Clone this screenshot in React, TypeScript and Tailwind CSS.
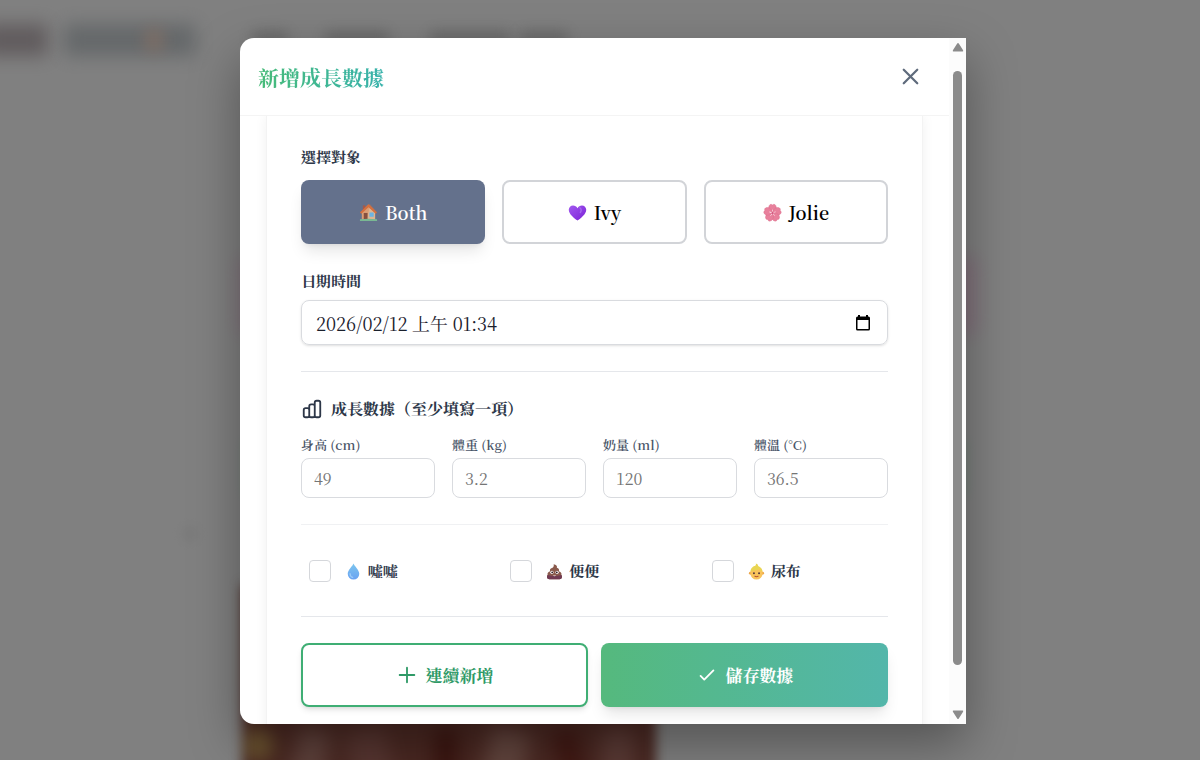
import React, { useState } from "react";

const ICONS = {
  close: "M6 18L18 6M6 6l12 12",
  plus: "M12 4v16m8-8H4",
  check: "M5 13l4 4L19 7",
  chart:
    "M9 19v-6a2 2 0 00-2-2H5a2 2 0 00-2 2v6a2 2 0 002 2h2a2 2 0 002-2zm0 0V9a2 2 0 012-2h2a2 2 0 012 2v10m-6 0a2 2 0 002 2h2a2 2 0 002-2m0 0V5a2 2 0 012-2h2a2 2 0 012 2v14a2 2 0 01-2 2h-2a2 2 0 01-2-2z",
};

const Icon = ({ name, className }: { name: keyof typeof ICONS; className: string }) => (
  <svg
    viewBox="0 0 24 24"
    fill="none"
    stroke="currentColor"
    strokeWidth={2}
    strokeLinecap="round"
    strokeLinejoin="round"
    className={className}
    aria-hidden="true"
  >
    <path d={ICONS[name]} />
  </svg>
);

const House = () => (
  <svg viewBox="0 0 20 20" className="size-[19px]" aria-hidden="true">
    <rect x="4" y="2.5" width="2.600" height="6" fill="#a55a4a" />
    <path d="M3 9.5 11 2.500l6 7V18H3z" fill="#dcb592" />
    <path d="M9 4 11.500 1 19 9.800l-1.700 1.200L11.200 4.600 8 18H3V11L1 9.800z" fill="#d9743f" opacity=".35" />
    <path d="M1 10 9.400 1.500a1 1 0 0 1 1.300 0L19 10l-1.500 1.400L10 4.400 2.500 11.400z" fill="#d4703f" />
    <rect x="5" y="10.500" width="4" height="7.500" fill="#86503f" />
    <rect x="11" y="10" width="4.500" height="4.500" fill="#6bb4e2" />
    <path d="M1 17.200q9-1.200 18 0V19H1z" fill="#79b893" />
  </svg>
);

const PurpleHeart = () => (
  <svg viewBox="0 0 20 20" className="size-[19px]" aria-hidden="true">
    <defs>
      <linearGradient id="heart" x1="0" y1="0" x2="1" y2="1">
        <stop offset="0" stopColor="#a259f0" />
        <stop offset="1" stopColor="#7a22d6" />
      </linearGradient>
    </defs>
    <path
      d="M10 18.5C7 16.5.8 12 .8 7.200.8 4.500 2.800 2.500 5.300 2.500 7.300 2.500 9 3.500 10 5.400 11 3.500 12.700 2.500 14.700 2.500c2.500 0 4.500 2 4.500 4.700C19.200 12 13 16.500 10 18.500z"
      fill="url(#heart)"
    />
    <path d="M12.500 5q2.500 2 .5 5" stroke="#a668ef" strokeWidth="1.500" fill="none" strokeLinecap="round" />
  </svg>
);

const Blossom = () => (
  <svg viewBox="0 0 20 20" className="size-[19px]" aria-hidden="true">
    {[0, 72, 144, 216, 288].map((angle) => (
      <g key={angle} transform={`rotate(${angle} 10 10.5)`}>
        <path
          d="M10 10.500C6 8.500 5.300 5 6.500 2.800c.8-1.500 2.300-1.800 3.500-.8 1.200-1 2.700-.7 3.500.8 1.200 2.200.5 5.700-3.500 7.700z"
          fill="#e8809c"
          stroke="#dd6c8b"
          strokeWidth=".4"
        />
        <path d="M10 10.500V7.500" stroke="#ffe9ef" strokeWidth=".9" strokeLinecap="round" />
      </g>
    ))}
    <circle cx="10" cy="10.500" r="1.100" fill="#d0527a" />
  </svg>
);

const Drop = () => (
  <svg viewBox="0 0 20 20" className="size-[17px]" aria-hidden="true">
    <defs>
      <linearGradient id="drop" x1="0" y1="0" x2="0" y2="1">
        <stop offset="0" stopColor="#7cc6ee" />
        <stop offset="1" stopColor="#6aa2f2" />
      </linearGradient>
    </defs>
    <path d="M10 .5c1 3 6.800 7.500 6.800 12.200a6.800 6.800 0 0 1-13.600 0C3.200 8 9 3.500 10 .5z" fill="url(#drop)" />
    <path d="M6 12.500q0 3.500 3 4.500" stroke="#9bcbf8" strokeWidth="1.500" fill="none" strokeLinecap="round" />
  </svg>
);

const Poo = () => (
  <svg viewBox="0 0 20 20" className="size-[17px]" aria-hidden="true">
    <path
      d="M9 1.500c3 .5 4.500 2 3.800 4.200 2.200.6 3 2.300 2.400 4 2.800 1 3.500 2.800 2.800 4.300 1.500 1.500 1 5-2 5H4c-3 0-3.500-3.500-2-5-.7-1.500 0-3.300 2.800-4.300C4.200 8 5 6.500 7 6c2-.6 2.500-2.500 2-4.500z"
      fill="#8a5a4c"
    />
    <path d="M2 14q8 2.500 16 0c1.500 1.500 1 5-2 5H4c-3 0-3.500-3.500-2-5z" fill="#713a52" />
    <circle cx="7" cy="11" r="1.900" fill="#fff" />
    <circle cx="13" cy="11" r="1.900" fill="#fff" />
    <circle cx="7.300" cy="11" r="1.100" fill="#2b1a22" />
    <circle cx="12.700" cy="11" r="1.100" fill="#2b1a22" />
    <path d="M8 14.800q2 1.600 4 0z" fill="#fff" />
  </svg>
);

const Baby = () => (
  <svg viewBox="0 0 20 20" className="size-[17px]" aria-hidden="true">
    <circle cx="2.800" cy="12" r="1.700" fill="#eda548" />
    <circle cx="17.200" cy="12" r="1.700" fill="#eda548" />
    <ellipse cx="10" cy="11.800" rx="7.200" ry="7.700" fill="#f9c45c" />
    <path d="M3 10C3 5.500 6.500 3.800 8.500 3.200 9.500 2.700 9.500 1.800 9.200.6c2 .6 3 1.800 2.700 2.800C15 4.500 17 6.800 17 10c-2-.6-3.200-1.600-4-2.800C10.500 9 6 9 3 10z" fill="#e9d552" />
    <circle cx="7" cy="12" r="1.100" fill="#4a2f3a" />
    <circle cx="13" cy="12" r="1.100" fill="#4a2f3a" />
    <path d="M8 15.500q2 1.400 4 0" stroke="#b5502e" strokeWidth="1.200" fill="none" strokeLinecap="round" />
  </svg>
);

const people = [
  { name: "Both", emoji: <House /> },
  { name: "Ivy", emoji: <PurpleHeart /> },
  { name: "Jolie", emoji: <Blossom /> },
];

const measures = [
  { id: "height", label: "身高 (cm)", placeholder: "49" },
  { id: "weight", label: "體重 (kg)", placeholder: "3.2" },
  { id: "milk", label: "奶量 (ml)", placeholder: "120" },
  { id: "temperature", label: "體溫 (°C)", placeholder: "36.5" },
];

const events = [
  { id: "pee", label: "噓噓", emoji: <Drop /> },
  { id: "poo", label: "便便", emoji: <Poo /> },
  { id: "diaper", label: "尿布", emoji: <Baby /> },
];

// Out-of-focus page behind the dialog
const Backdrop = () => (
  <div className="absolute inset-0 overflow-hidden bg-[#808080]" aria-hidden="true">
    <div className="absolute -left-4 top-6 h-8 w-16 bg-[#51494c] opacity-65 blur-[9px]" />
    <div className="absolute left-16 top-6 h-8 w-[132px] bg-[#54595c] opacity-60 blur-[9px]" />
    <div className="absolute left-36 top-7 h-6 w-5 bg-[#8a7062] opacity-50 blur-[7px]" />
    <div className="absolute left-[252px] top-8 h-3 w-9 bg-[#555] opacity-60 blur-[7px]" />
    <div className="absolute left-[325px] top-8 h-3 w-16 bg-[#555] opacity-60 blur-[7px]" />
    <div className="absolute left-[430px] top-8 h-3 w-20 bg-[#555] opacity-60 blur-[7px]" />
    <div className="absolute left-[520px] top-8 h-3 w-12 bg-[#555] opacity-60 blur-[7px]" />
    <div className="absolute left-[238px] top-64 h-20 w-[740px] rounded-xl bg-[#85697a] opacity-55 blur-[8px]" />
    <div className="absolute left-[242px] top-[440px] h-14 w-[726px] bg-[#6f8577] opacity-50 blur-[5px]" />
    <div className="absolute left-[182px] top-[526px] size-4 rounded-full bg-[#747474] opacity-50 blur-[6px]" />
    <div className="absolute left-[242px] top-[585px] h-56 w-[414px] overflow-hidden bg-[#4a2822] blur-[6px]">
      <div className="absolute left-0 top-36 size-8 rounded-full bg-[#6b5430] blur-[7px]" />
      <div className="absolute left-12 top-36 h-24 w-8 rotate-12 bg-[#5f423c] blur-[8px]" />
      <div className="absolute left-28 top-36 h-24 w-10 -rotate-12 bg-[#573631] blur-[8px]" />
      <div className="absolute left-48 top-36 h-24 w-6 bg-[#3b1611] blur-[7px]" />
      <div className="absolute left-60 top-36 h-24 w-10 rotate-12 bg-[#62453e] blur-[8px]" />
      <div className="absolute left-80 top-36 h-24 w-6 -rotate-12 bg-[#401813] blur-[7px]" />
      <div className="absolute left-[360px] top-36 h-24 w-8 bg-[#5b3b36] blur-[8px]" />
    </div>
  </div>
);

const Scrollbar = () => (
  <div className="flex w-[17px] shrink-0 flex-col items-center bg-[#fcfcfc] py-1" aria-hidden="true">
    <svg viewBox="0 0 12 12" className="size-3 fill-[#8b8b8b]">
      <path d="M5.200 1.600 .9 8.300Q.4 9.500 1.500 9.500h9q1.100 0 .6-1.200L6.800 1.600q-.8-1-1.600 0z" />
    </svg>
    <div className="mb-[43px] mt-[17px] w-[9px] grow rounded-full bg-[#8b8b8b]" />
    <svg viewBox="0 0 12 12" className="size-3 rotate-180 fill-[#8b8b8b]">
      <path d="M5.200 1.600 .9 8.300Q.4 9.500 1.500 9.500h9q1.100 0 .6-1.200L6.800 1.600q-.8-1-1.600 0z" />
    </svg>
  </div>
);

const App = () => {
  const [person, setPerson] = useState("Both");
  const [date, setDate] = useState("2026/02/12 上午 01:34");

  return (
    <div className="relative flex h-screen items-center justify-center overflow-hidden pl-1.5 pt-0.5 font-['Noto_Serif_TC','Noto_Serif_CJK_TC','Liberation_Serif','Noto_Sans_CJK_TC',serif] text-[#2d3748]">
      <Backdrop />
      <div
        role="dialog"
        aria-modal="true"
        aria-labelledby="dialog-title"
        className="relative flex h-[calc(100vh-74px)] w-full max-w-[726px] overflow-hidden rounded-l-[14px] bg-white shadow-[0_20px_50px_rgba(0,0,0,0.35)]"
      >
        <div className="flex min-w-0 grow flex-col">
          <header className="flex h-[78px] shrink-0 items-center justify-between border-b border-[#f4f4f4] pl-[18px] pr-[25px]">
            <h2
              id="dialog-title"
              className="bg-linear-to-r from-[#48bb78] to-[#38b2ac] bg-clip-text text-[21px] font-bold leading-8 text-transparent"
            >
              新增成長數據
            </h2>
            <button type="button" aria-label="關閉" className="text-[#5f6b7c]">
              <Icon name="close" className="size-[27px]" />
            </button>
          </header>

          <div className="min-h-0 grow overflow-hidden px-[26px]">
            <form
              className="border-x border-[#f3f3f3] px-[34px] pb-10 pt-[30px] shadow-[0_0_12px_rgba(0,0,0,0.06)]"
              onSubmit={(e) => e.preventDefault()}
            >
              <p id="person-label" className="text-[15px] font-bold leading-[22px]">
                選擇對象
              </p>
              <div role="group" aria-labelledby="person-label" className="mt-3 grid grid-cols-3 gap-[17px]">
                {people.map(({ name, emoji }) => (
                  <button
                    key={name}
                    type="button"
                    aria-pressed={person === name}
                    onClick={() => setPerson(name)}
                    className={
                      person === name
                        ? "flex h-16 items-center justify-center gap-[7px] rounded-lg bg-[#64718c] text-lg font-semibold text-white shadow-lg"
                        : "flex h-16 items-center justify-center gap-[7px] rounded-lg border-2 border-[#d2d4d8] bg-white text-lg font-semibold text-black"
                    }
                  >
                    {emoji}
                    {name}
                  </button>
                ))}
              </div>

              <label htmlFor="date" className="mt-[26px] block text-[15px] font-bold leading-[22px]">
                日期時間
              </label>
              <div className="mt-2 flex h-[45px] items-center rounded-lg border border-[#d9dbdf] pl-[14px] pr-4 shadow-sm">
                <input
                  id="date"
                  type="text"
                  value={date}
                  onChange={(e) => setDate(e.target.value)}
                  className="min-w-0 grow bg-transparent text-lg leading-7 text-[#1a202c] outline-none"
                />
                <button type="button" aria-label="選擇日期" className="text-black">
                  <svg viewBox="0 0 16 18" className="h-[18px] w-4" fill="currentColor" aria-hidden="true">
                    <path d="M3 1h2v1.500h6V1h2v1.500h.500A1.500 1.500 0 0 1 15 4v11a1.500 1.500 0 0 1-1.500 1.500h-11A1.500 1.500 0 0 1 1 15V4a1.500 1.500 0 0 1 1.500-1.500H3zM2.500 6v9h11V6z" fillRule="evenodd" />
                  </svg>
                </button>
              </div>

              <hr className="mt-[26px] border-[#e5e7eb]" />

              <h3 className="mt-[26px] flex items-center gap-2 text-base font-bold leading-[22px]">
                <Icon name="chart" className="size-[22px]" />
                成長數據（至少填寫一項）
              </h3>
              <div className="mt-4 grid grid-cols-4 gap-[17px]">
                {measures.map(({ id, label, placeholder }) => (
                  <div key={id} className="min-w-0">
                    <label htmlFor={id} className="block text-[13px] font-semibold leading-[18px] text-[#4a5568]">
                      {label}
                    </label>
                    <input
                      id={id}
                      type="text"
                      inputMode="decimal"
                      placeholder={placeholder}
                      className="mt-1 h-10 w-full rounded-lg border border-[#d9dbdf] px-3 text-base outline-none placeholder:text-[#757575]"
                    />
                  </div>
                ))}
              </div>

              <hr className="mt-[26px] border-[#f0f1f3]" />

              <div className="mt-[35px] grid grid-cols-3 gap-[17px]">
                {events.map(({ id, label, emoji }) => (
                  <label key={id} htmlFor={id} className="flex items-center pl-2 text-[15px] font-bold leading-[22px]">
                    <input
                      id={id}
                      type="checkbox"
                      className="mr-3.5 size-[22px] appearance-none rounded border border-[#d5d7db] bg-white checked:bg-[#48bb78]"
                    />
                    <span className="flex items-center gap-1.5">
                      {emoji}
                      {label}
                    </span>
                  </label>
                ))}
              </div>

              <hr className="mt-[34px] border-[#e5e7eb]" />

              <div className="mt-[26px] grid grid-cols-2 gap-[13px]">
                <button
                  type="button"
                  className="flex h-16 items-center justify-center gap-2 rounded-lg border-2 border-[#3fae74] bg-white text-[17px] font-bold text-[#2f9a67] shadow-md"
                >
                  <Icon name="plus" className="size-[22px]" />
                  連續新增
                </button>
                <button
                  type="submit"
                  className="flex h-16 items-center justify-center gap-2 rounded-lg bg-linear-to-r from-[#55b97d] to-[#53b6aa] text-[17px] font-bold text-white shadow-lg"
                >
                  <Icon name="check" className="size-[22px]" />
                  儲存數據
                </button>
              </div>
            </form>
          </div>
        </div>
        <Scrollbar />
      </div>
    </div>
  );
};

export default App;
